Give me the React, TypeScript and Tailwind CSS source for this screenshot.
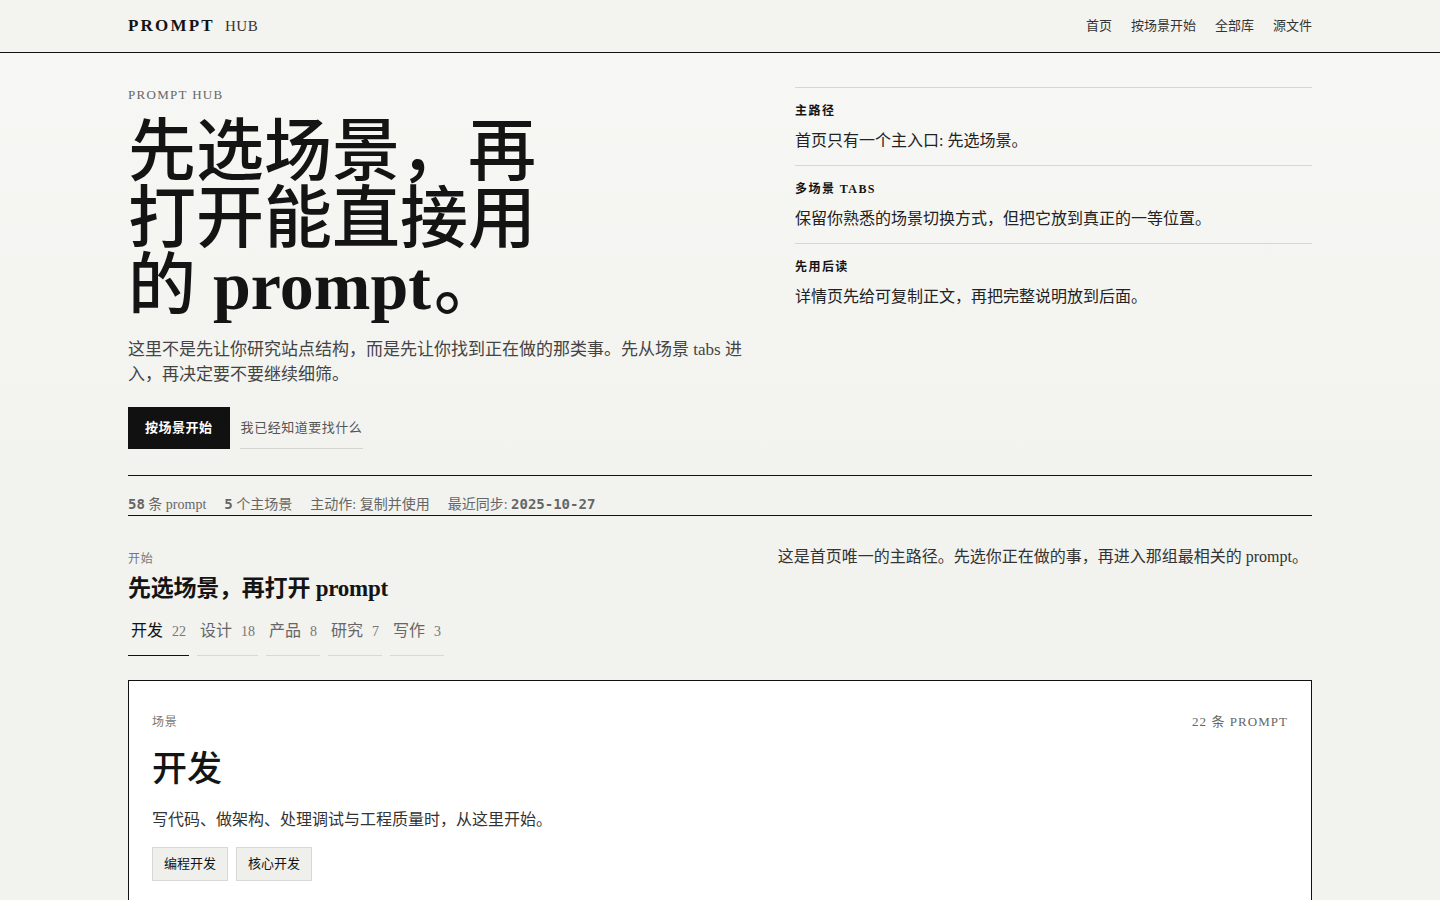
const serif = "font-['Liberation_Serif','Noto_Sans_CJK_SC',serif]";
const mono = "font-['DejaVu_Sans_Mono',monospace] text-[14px] font-semibold";

const notes = [
  { label: "主路径", text: "首页只有一个主入口: 先选场景。" },
  { label: "多场景 TABS", text: "保留你熟悉的场景切换方式，但把它放到真正的一等位置。" },
  { label: "先用后读", text: "详情页先给可复制正文，再把完整说明放到后面。" },
];

const tabs = [
  { name: "开发", count: 22 },
  { name: "设计", count: 18 },
  { name: "产品", count: 8 },
  { name: "研究", count: 7 },
  { name: "写作", count: 3 },
];

export default function App() {
  return (
    <div className={`min-h-screen bg-[#f2f2ee] text-[#141414] ${serif}`}>
      {/* Header */}
      <header className="h-[53px] border-b border-[#111] bg-[#f3f3f0]">
        <div className="mx-auto flex h-full max-w-[1184px] items-center justify-between">
          <div className="flex items-baseline gap-[10px]">
            <span className="text-[17px] font-bold tracking-[0.13em]">PROMPT</span>
            <span className="text-[15px] tracking-[0.04em] text-[#333]">HUB</span>
          </div>
          <nav className="flex items-center gap-[19px] text-[13px] text-[#333]">
            <a>首页</a>
            <a>按场景开始</a>
            <a>全部库</a>
            <a>源文件</a>
          </nav>
        </div>
      </header>

      <main className="bg-gradient-to-b from-[#f7f7f5] to-[#f2f2ee] to-[420px]">
        <div className="mx-auto max-w-[1184px] pt-[34px]">
          {/* Hero */}
          <section className="grid grid-cols-[619px_1fr] gap-12">
            <div>
              <p className="text-[13px] leading-4 tracking-[0.1em] text-[#666]">PROMPT HUB</p>
              <h1 className="mt-[16px] max-w-[440px] text-[68px] font-medium leading-[67px]">
                先选场景，再打开能直接用的 <span className="inline-block pr-[3px] font-bold leading-[67px]">prompt</span>。
              </h1>
              <p className="mt-[17px] text-[17px] leading-[25px] text-[#444]">
                这里不是先让你研究站点结构，而是先让你找到正在做的那类事。先从场景 tabs 进入，再决定要不要继续细筛。
              </p>
              <div className="mt-[20px] flex items-center gap-[10px]">
                <button className="h-[42px] bg-[#111] px-[17px] text-[13px] font-semibold tracking-[0.04em] text-white">
                  按场景开始
                </button>
                <button className="h-[42px] border-b border-[#d4d4d0] px-px text-[13px] tracking-[0.04em] text-[#555]">
                  我已经知道要找什么
                </button>
              </div>
            </div>

            <div className="border-t border-[#d6d6d2]">
              {notes.map((n, i) => (
                <div
                  key={n.label}
                  className={`pb-[12px] pt-[15px] ${i < notes.length - 1 ? "border-b border-[#d6d6d2]" : ""}`}
                >
                  <p className="text-[12px] font-bold leading-4 tracking-[0.12em]">{n.label}</p>
                  <p className="mt-[10px] text-[16px] leading-6 text-[#222]">{n.text}</p>
                </div>
              ))}
            </div>
          </section>

          {/* Stats */}
          <div className="mt-[26px] flex items-end gap-[18px] border-y border-[#111] pb-px pt-[19px] text-[14px] leading-[19px] text-[#666]">
            <span>
              <b className={mono}>58</b> 条 prompt
            </span>
            <span>
              <b className={mono}>5</b> 个主场景
            </span>
            <span>主动作: 复制并使用</span>
            <span>
              最近同步: <b className={mono}>2025-10-27</b>
            </span>
          </div>

          {/* Start section */}
          <section className="mt-[33px]">
            <div className="flex items-start justify-between">
              <div>
                <p className="mt-[2px] text-[12px] leading-4 tracking-[0.06em] text-[#777]">开始</p>
                <h2 className="mt-[6px] text-[23px] font-semibold leading-8 tracking-[-0.01em]">
                  先选场景，再打开 prompt
                </h2>
              </div>
              <p className="-mt-1 pr-1 text-[16px] leading-6 text-[#333]">
                这是首页唯一的主路径。先选你正在做的事，再进入那组最相关的 prompt。
              </p>
            </div>

            <div className="mt-[13px] flex gap-2">
              {tabs.map((t, i) => (
                <button
                  key={t.name}
                  className={`flex items-baseline gap-[9px] px-[3px] pb-[12px] pt-px ${
                    i === 0 ? "border-b border-[#111] text-[#111]" : "border-b border-[#d8d8d4] text-[#666]"
                  }`}
                >
                  <span className="text-[16px] leading-6">{t.name}</span>
                  <span className="text-[14px] text-[#777]">{t.count}</span>
                </button>
              ))}
            </div>

            {/* Scene card */}
            <div className="mt-6 border border-[#111] bg-white px-[23px] pb-10 pt-[33px]">
              <div className="flex items-center justify-between">
                <p className="text-[12px] leading-4 tracking-[0.06em] text-[#777]">场景</p>
                <p className="text-[13px] leading-4 tracking-[0.08em] text-[#666]">22 条 PROMPT</p>
              </div>
              <h3 className="mt-[18px] text-[35px] font-medium leading-[44px]">开发</h3>
              <p className="mt-[16px] text-[16px] leading-6 text-[#333]">
                写代码、做架构、处理调试与工程质量时，从这里开始。
              </p>
              <div className="mt-[15px] flex gap-2">
                <span className="border border-[#d8d8d4] bg-[#efefeb] px-[11px] py-[7px] text-[13px] leading-[18px]">
                  编程开发
                </span>
                <span className="border border-[#d8d8d4] bg-[#efefeb] px-[11px] py-[7px] text-[13px] leading-[18px]">
                  核心开发
                </span>
              </div>
            </div>
          </section>
        </div>
      </main>
    </div>
  );
}
